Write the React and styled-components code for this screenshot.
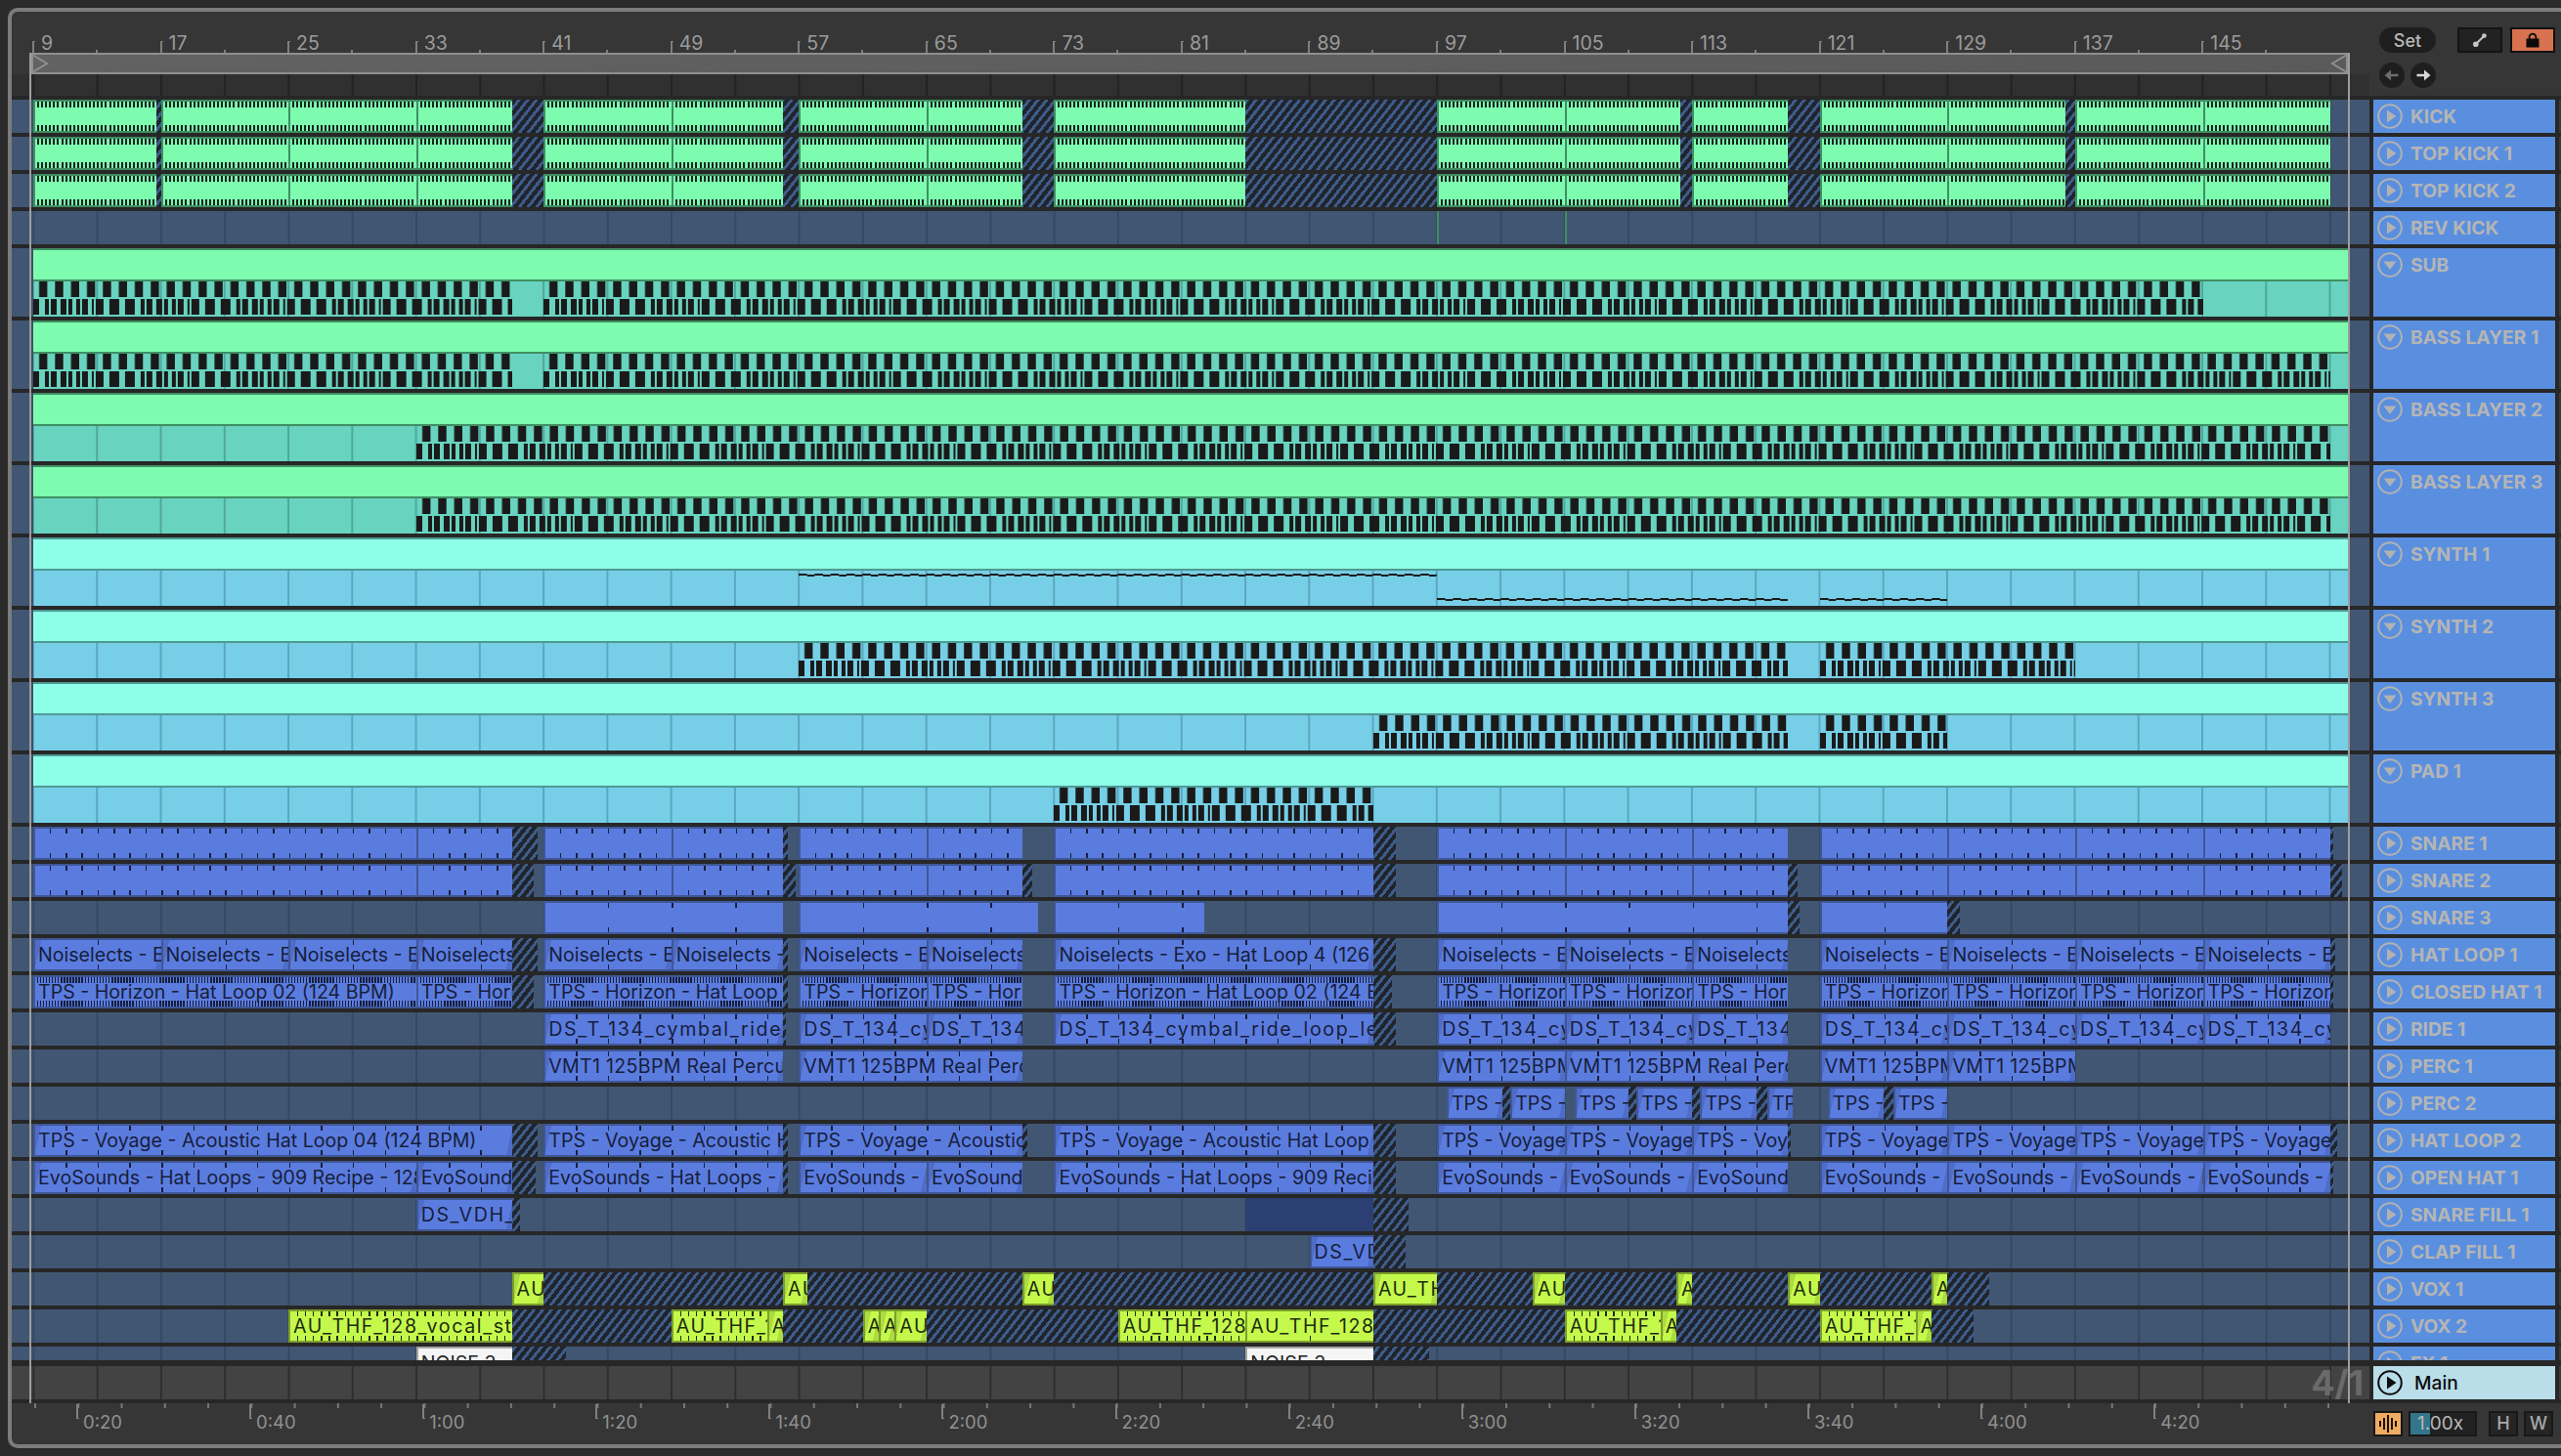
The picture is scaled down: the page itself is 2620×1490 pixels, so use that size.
import React from "react";
import styled, { createGlobalStyle } from "styled-components";

const BAR = 16.32;
const barX = (bar) => 22 + (bar - 9) * BAR;
const span = (a, b) => ({ left: barX(a), width: (b - a) * BAR });

const TONES = {
  green: { fill: "#7dfcb0", edge: "#3f8f62", ink: "#14241c", fade: "#7dfcb0" },
  blue: { fill: "#5b7cdf", edge: "#3f5796", ink: "#161e3c", fade: "#4f6dc8" },
  lime: { fill: "#c4f94c", edge: "#7d9e2c", ink: "#1f2b0c", fade: "#abdc40" },
  white: { fill: "#f5f5f5", edge: "#a4a4a4", ink: "#222222", fade: "#f5f5f5" },
};

const TICKS = { kick: 4.08, bar: 16.32, two: 32.64, four: 65.28, dense: 3.06, half: 8.16 };

const nameSpacing = (text) => (text.includes("_") ? 1.6 : text.startsWith("VMT1") ? 0.3 : 0);

// only what fits in the clip is shown, the rest of the name is dropped
const visibleName = (text, a, b) => text.slice(0, Math.ceil(((b - a) * BAR) / 8.5) + 1);

const GlobalStyle = createGlobalStyle`
  html, body {
    margin: 0;
    padding: 0;
    background: #2b2b2b;
  }
  body {
    font-family: Inter, "Liberation Sans", sans-serif;
    width: 2620px;
    height: 1490px;
    overflow: hidden;
  }
`;

const Frame = styled.div`
  position: relative;
  box-sizing: border-box;
  margin: 8px 0 0 8px;
  width: 2612px;
  height: 1474px;
  border: 4px solid #7c7c7c;
  border-right: none;
  border-radius: 10px 0 0 10px;
  background: #363636;
  display: flex;
  flex-direction: column;
  overflow: hidden;
`;

const TopBar = styled.div`
  display: flex;
  height: 86px;
  flex: none;
`;

const TopLeft = styled.div`
  width: 2412px;
  flex: none;
  display: flex;
  flex-direction: column;
`;

const BeatRuler = styled.div`
  display: flex;
  height: 64px;
  padding-left: 21px;
`;

const BeatMark = styled.div`
  position: relative;
  width: 130.56px;
  flex: none;
  padding: 23px 0 0 9px;
  box-sizing: border-box;
  font-size: 19.5px;
  line-height: 18px;
  color: #9b9b9b;

  &::before {
    content: "";
    position: absolute;
    left: 0;
    top: 30px;
    width: 3px;
    height: 12px;
    border-left: 2px solid #7e7e7e;
    border-top: 1px solid #7e7e7e;
    box-sizing: border-box;
  }
  &::after {
    content: "";
    position: absolute;
    left: 65px;
    top: 39px;
    width: 2px;
    height: 3px;
    background: #7e7e7e;
  }
`;

const GridStrip = styled.div`
  height: 22px;
  background-color: #303030;
  background-image: linear-gradient(90deg, #222222 2px, transparent 2px);
  background-size: 65.28px 100%;
  background-position: 21.4px 0;
`;

const Controls = styled.div`
  flex: 1;
  padding: 16px 0 0 10px;
  display: grid;
  grid-template-columns: 58px 68px 54px;
  grid-template-rows: 26px 26px;
  row-gap: 10px;
`;

const SetButton = styled.button`
  width: 58px;
  height: 26px;
  border: none;
  border-radius: 13px;
  background: #1e1e1e;
  color: #b9b9b9;
  font: 500 18px Inter, sans-serif;
  padding: 0;
`;

const SquareButton = styled.button`
  box-sizing: border-box;
  width: 46px;
  height: 26px;
  margin-left: ${(p) => p.$offset}px;
  border: 2px solid ${(p) => (p.$on ? "#111111" : "#141414")};
  background: ${(p) => (p.$on ? "#d8714f" : "#222222")};
  display: flex;
  align-items: center;
  justify-content: center;
  padding: 0;
`;

const ArrowPair = styled.div`
  grid-column: 1;
  display: flex;
  gap: 6px;
`;

const ArrowButton = styled.button`
  width: 26px;
  height: 26px;
  border: none;
  border-radius: 50%;
  background: #1e1e1e;
  display: flex;
  align-items: center;
  justify-content: center;
  padding: 0;
`;

const Divider = styled.div`
  height: ${(p) => p.$h}px;
  flex: none;
  background: #272727;
`;

const TrackList = styled.div`
  height: 1290px;
  flex: none;
  overflow: hidden;
  display: flex;
  flex-direction: column;
  gap: 4px;
  background: #272727;
`;

const Row = styled.div`
  display: flex;
  flex: none;
  height: ${(p) => p.$h}px;
  background: #272727;
`;

const Lane = styled.div`
  position: relative;
  width: 2412px;
  flex: none;
  background-color: #415672;
  background-image: linear-gradient(90deg, #35495f 2px, transparent 2px);
  background-size: 65.28px 100%;
  background-position: 21.4px 0;
  overflow: hidden;
`;

const Clip = styled.div`
  position: absolute;
  top: 0;
  bottom: 0;
  box-sizing: border-box;
  display: flex;
  align-items: center;
  overflow: hidden;
  border-top: 2px solid ${(p) => TONES[p.$tone].edge};
  border-bottom: 2px solid ${(p) => TONES[p.$tone].edge};
  border-left: 2px solid ${(p) => TONES[p.$tone].edge};
  background-color: ${(p) => TONES[p.$tone].fill};
  ${(p) =>
    p.$fade &&
    `background-image:
      linear-gradient(103deg, ${TONES[p.$tone].fade} 6px, transparent 6px),
      linear-gradient(-77deg, ${TONES[p.$tone].fade} 6px, transparent 6px);`}
  color: ${(p) => TONES[p.$tone].ink};

  ${(p) =>
    p.$ticks &&
    `&::before, &::after {
      content: "";
      position: absolute;
      left: 0;
      right: 0;
      height: ${p.$ticks === "kick" || p.$ticks === "dense" ? 6 : 5}px;
      background-image: repeating-linear-gradient(
        90deg,
        transparent 0 ${TICKS[p.$ticks] - (p.$ticks === "kick" ? 2 : 1.5)}px,
        ${TONES[p.$tone].ink} ${TICKS[p.$ticks] - (p.$ticks === "kick" ? 2 : 1.5)}px ${TICKS[p.$ticks]}px
      );
    }
    &::before { top: 0; }
    &::after { bottom: 0; }`}
`;

const ClipName = styled.span`
  display: block;
  flex: 1;
  min-width: 0;
  padding-left: 3px;
  overflow: hidden;
  font-size: 19.6px;
  letter-spacing: ${(p) => p.$spacing}px;
  line-height: 30px;
  white-space: nowrap;
`;

const Hatch = styled.div`
  position: absolute;
  top: 0;
  bottom: 0;
  background-image: repeating-linear-gradient(
    -52deg,
    #20242c 0 4px,
    #3e5b88 4px 7px
  );
`;

const Selection = styled.div`
  position: absolute;
  top: 0;
  bottom: 0;
  background: #2c3f72;
`;

const GroupClip = styled.div`
  position: absolute;
  left: 22px;
  width: 2368px;
  top: 0;
  bottom: 0;
  display: flex;
  flex-direction: column;
  border-top: 2px solid ${(p) => p.$edge};
`;

const GroupHead = styled.div`
  height: 30px;
  flex: none;
  background: ${(p) => p.$fill};
  border-bottom: 2px solid ${(p) => p.$edge};
`;

const GroupBody = styled.div`
  position: relative;
  flex: 1;
  background-color: ${(p) => p.$fill};
  background-image: linear-gradient(90deg, ${(p) => p.$grid} 2px, transparent 2px);
  background-size: 65.28px 100%;
  background-position: -1px 0;
`;

const NoteRow = styled.div`
  position: absolute;
  height: 16px;
`;

const PulseNotes = styled(NoteRow)`
  top: 0;
  background-image: linear-gradient(
    90deg,
    transparent 6px,
    #2c4c48 6px 7px,
    #1a1a1a 7px 14px,
    transparent 14px
  );
  background-size: 16.32px 100%;
`;

const RiffNotes = styled(NoteRow)`
  top: 18px;
  background-image: linear-gradient(
    90deg,
    #1a1a1a 0 6px,
    transparent 6px 12px,
    #1a1a1a 12px 16px,
    transparent 16px 18px,
    #1a1a1a 18px 24px,
    transparent 24px 28px,
    #1a1a1a 28px 34px,
    transparent 34px 36px,
    #1a1a1a 36px 40px,
    transparent 40px 44px,
    #1a1a1a 44px 48px,
    transparent 48px 50px,
    #1a1a1a 50px 56px,
    transparent 56px 60px,
    #1a1a1a 60px 62px,
    transparent 62px 64px,
    #1a1a1a 64px 72px,
    transparent 72px 78px,
    #1a1a1a 78px 88px,
    transparent 88px 94px,
    #1a1a1a 94px 97.92px
  );
  background-size: 97.92px 100%;
`;

const Squiggle = styled.div`
  position: absolute;
  top: ${(p) => p.$top}px;
  height: 3px;
  background-image:
    linear-gradient(90deg, #1a1a1a 9px, transparent 9px),
    linear-gradient(90deg, transparent 9px, #1a1a1a 9px);
  background-size: 16.32px 2px, 16.32px 2px;
  background-position: 0 0, 0 1px;
  background-repeat: repeat-x;
`;

const Header = styled.div`
  width: 186px;
  margin-left: 4px;
  flex: none;
  box-sizing: border-box;
  padding: 4px 0 0 4px;
  display: flex;
  align-items: flex-start;
  gap: 8px;
  background: ${(p) => (p.$main ? "#b9dde9" : "#5a8fdf")};
  color: ${(p) => (p.$main ? "#0c0c0c" : "#b5b5b5")};
  font-size: 19.2px;
  font-weight: ${(p) => (p.$main ? 500 : 700)};
  line-height: 27px;
  white-space: nowrap;
`;

const Tail = styled.div`
  margin-left: 4px;
  flex: 1;
  background: #3a3a3a;
`;

const MainLane = styled.div`
  position: relative;
  width: 2412px;
  flex: none;
  background-color: #434343;
  background-image: linear-gradient(90deg, #2e2e2e 2px, transparent 2px);
  background-size: 65.28px 100%;
  background-position: 21.4px 0;
`;

const Meter = styled.div`
  position: absolute;
  right: 6px;
  top: 0;
  font-size: 36px;
  font-weight: 700;
  line-height: 34px;
  color: #6a6a6a;
`;

const MainName = styled.span`
  margin-left: 4px;
`;

const TimeRow = styled.div`
  display: flex;
  flex: 1;
`;

const TimeRuler = styled.div`
  width: 2412px;
  flex: none;
  display: flex;
  padding-left: 66px;
  box-sizing: border-box;
  background-image: linear-gradient(90deg, #777777 2px, transparent 2px);
  background-size: 44.27px 5px;
  background-position: 23px 0;
  background-repeat: repeat-x;
`;

const TimeMark = styled.div`
  position: relative;
  width: 177.1px;
  flex: none;
  box-sizing: border-box;
  padding: 9px 0 0 7px;
  font-size: 18.5px;
  line-height: 20px;
  color: #909090;

  &::before {
    content: "";
    position: absolute;
    left: 0;
    top: 1px;
    width: 3px;
    height: 15px;
    border-left: 2px solid #808080;
    border-bottom: 1px solid #808080;
    box-sizing: border-box;
  }
`;

const BottomControls = styled.div`
  padding: 8px 0 0 4px;
  display: flex;
  gap: 6px;
`;

const WaveButton = styled.div`
  box-sizing: border-box;
  width: 30px;
  height: 26px;
  border: 2px solid #181818;
  background: #f0ab62;
  display: flex;
  align-items: center;
  justify-content: center;
`;

const ZoomField = styled.div`
  box-sizing: border-box;
  width: 70px;
  height: 26px;
  border: 2px solid #181818;
  background: linear-gradient(90deg, #33758a 20px, #212121 20px);
  color: #b8b8b8;
  font-size: 19px;
  line-height: 22px;
  padding-left: 7px;
`;

const LetterButton = styled.div`
  box-sizing: border-box;
  width: 30px;
  height: 26px;
  margin-left: ${(p) => p.$offset}px;
  border: 2px solid #181818;
  background: #252525;
  color: #a8a8a8;
  font-size: 18px;
  font-weight: 500;
  line-height: 22px;
  text-align: center;
`;

const LoopFrame = styled.div`
  position: absolute;
  left: 18px;
  top: 42px;
  width: 2374px;
  height: 1382px;
  box-sizing: border-box;
  border-left: 2px solid #9d9d9d;
  border-right: 2px solid #9d9d9d;
  pointer-events: none;
`;

const LoopBar = styled.div`
  height: 22px;
  box-sizing: border-box;
  border-top: 2px solid #8f8f8f;
  border-bottom: 2px solid #8f8f8f;
  background: linear-gradient(90deg, #626262, #5a5a5a);
  display: flex;
  align-items: center;
  justify-content: space-between;
`;

const TrackIcon = ({ open, main }) => {
  const color = main ? "#0c0c0c" : "#b2b2b2";
  return (
    <svg width="26" height="26" viewBox="0 0 26 26" style={{ flex: "none" }}>
      <circle cx="13" cy="13" r="11.8" fill="none" stroke={color} strokeWidth="2" />
      {open ? (
        <polygon points="6.5,9.5 19.5,9.5 13,18" fill={color} />
      ) : (
        <polygon points="10,6.5 19.5,13 10,19.5" fill={color} />
      )}
    </svg>
  );
};

const kickClips = [[9, 16.7], [17, 25], [25, 33], [33, 39], [41, 49], [49, 56], [57, 65], [65, 71], [73, 85], [97, 105], [105, 112.25], [113, 119], [121, 129], [129, 136.4], [137, 145], [145, 153]];
const kickHatch = [[16.7, 17], [39, 41], [56, 57], [71, 73], [85, 97], [112.25, 113], [119, 121], [136.4, 137]];
const tailBars = [[97, 105], [105, 113], [113, 119], [121, 129], [129, 137], [137, 145], [145, 153]];

const blue = (ticks, text, spans, fade = true) =>
  spans.map(([a, b]) => ({ a, b, tone: "blue", ticks, text, fade }));
const green = (spans) => spans.map(([a, b]) => ({ a, b, tone: "green", ticks: "kick" }));
const lime = (ticks, text, spans) => spans.map(([a, b]) => ({ a, b, tone: "lime", ticks, text, fade: !ticks }));

const PALETTES = {
  green: { head: "#7dfcb0", edge: "#3f8f62", body: "#68d3bf", grid: "#4fa79e" },
  mint: { head: "#8dfee8", edge: "#4e9a93", body: "#76cfe6", grid: "#5ba6c0" },
};

const TRACKS = [
  { name: "KICK", clips: green(kickClips), hatch: kickHatch },
  { name: "TOP KICK 1", clips: green(kickClips), hatch: kickHatch },
  { name: "TOP KICK 2", clips: green(kickClips), hatch: kickHatch },
  { name: "REV KICK", clips: [[97, 97.1], [105, 105.1]].map(([a, b]) => ({ a, b, tone: "green" })) },
  { name: "SUB", palette: "green", notes: [[9, 39], [41, 145]] },
  { name: "BASS LAYER 1", palette: "green", notes: [[9, 39], [41, 153]] },
  { name: "BASS LAYER 2", palette: "green", notes: [[33, 153]] },
  { name: "BASS LAYER 3", palette: "green", notes: [[33, 153]] },
  { name: "SYNTH 1", palette: "mint", lines: [[57, 97, 3], [97, 119, 28], [121, 129, 28]] },
  { name: "SYNTH 2", palette: "mint", notes: [[57, 119], [121, 137]] },
  { name: "SYNTH 3", palette: "mint", notes: [[93, 119], [121, 129]] },
  { name: "PAD 1", palette: "mint", notes: [[73, 93]] },
  {
    name: "SNARE 1",
    clips: blue("bar", "", [[9, 33], [33, 39], [41, 49], [49, 56], [57, 65], [65, 71], [73, 93], ...tailBars], false),
    hatch: [[39, 40.6], [56, 56.3], [93, 94.4], [104.9, 105], [128.9, 129], [153, 153.2]],
  },
  {
    name: "SNARE 2",
    clips: blue("bar", "", [[9, 33], [33, 39], [41, 49], [49, 56], [57, 65], [65, 71], [73, 93], ...tailBars], false),
    hatch: [[39, 40.4], [56, 56.8], [71, 71.6], [93, 94.4], [119, 119.6], [153, 153.7]],
  },
  {
    name: "SNARE 3",
    clips: blue("four", "", [[41, 56], [57, 72], [73, 82.4], [97, 119], [121, 129]], false),
    hatch: [[119, 119.7], [129, 129.8]],
  },
  {
    name: "HAT LOOP 1",
    clips: blue("four", "Noiselects - Exo - Hat Loop 4 (126 BPM)", [[9, 17], [17, 25], [25, 33], [33, 39], [41, 49], [49, 56], [57, 65], [65, 71], [73, 93], ...tailBars]),
    hatch: [[39, 40.6], [56, 56.3], [93, 94.4], [153, 153.3]],
  },
  {
    name: "CLOSED HAT 1",
    clips: blue("dense", "TPS - Horizon - Hat Loop 02 (124 BPM)", [[9, 33], [33, 39], [41, 56], [57, 65], [65, 71], [73, 93], ...tailBars], false),
    hatch: [[39, 40.4], [56, 56.3], [93, 94.2], [153, 153.2]],
  },
  {
    name: "RIDE 1",
    clips: blue("two", "DS_T_134_cymbal_ride_loop_lead", [[41, 56], [57, 65], [65, 71], [73, 93], ...tailBars]),
    hatch: [[56, 56.2], [93, 94.4]],
  },
  {
    name: "PERC 1",
    clips: blue("two", "VMT1 125BPM Real Percussion", [[41, 56], [57, 71], [97, 105], [105, 119], [121, 129], [129, 137]]),
  },
  {
    name: "PERC 2",
    clips: blue("", "TPS - Voyage - Perc", [[97.6, 101.1], [101.6, 105], [105.6, 109], [109.5, 113], [113.5, 117], [117.7, 119.3], [121.5, 125], [125.6, 129]]),
    hatch: [[101.1, 101.6], [109, 109.5], [113, 113.5], [117, 117.7], [125, 125.6]],
  },
  {
    name: "HAT LOOP 2",
    clips: blue("two", "TPS - Voyage - Acoustic Hat Loop 04 (124 BPM)", [[9, 39], [41, 56], [57, 71], [73, 93], ...tailBars]),
    hatch: [[39, 40.6], [56, 56.3], [71, 71.3], [93, 94.4], [119, 119.2], [153, 153.4]],
  },
  {
    name: "OPEN HAT 1",
    clips: blue("two", "EvoSounds - Hat Loops - 909 Recipe - 128 BPM", [[9, 33], [33, 39], [41, 56], [57, 65], [65, 71], [73, 93], ...tailBars]),
    hatch: [[39, 40.5], [56, 56.3], [93, 94.4], [153, 153.2]],
  },
  {
    name: "SNARE FILL 1",
    clips: blue("", "DS_VDH_Snare_Fill", [[33, 39]]),
    hatch: [[39, 39.5], [93, 95.2]],
    selection: [85, 93],
  },
  {
    name: "CLAP FILL 1",
    clips: blue("", "DS_VDH_Clap_Fill", [[89, 93]]),
    hatch: [[93, 95]],
  },
  {
    name: "VOX 1",
    clips: lime("", "AU_THF_128_vocal_stab", [[39, 41], [56, 57.5], [71, 73], [93, 97], [103, 105], [112, 113], [119, 121], [128, 129]]),
    hatch: [[41, 56], [57.5, 71], [73, 93], [97, 103], [105, 112], [113, 119], [121, 128], [129, 131.6]],
  },
  {
    name: "VOX 2",
    clips: [
      ...lime("half", "AU_THF_128_vocal_stab", [[25, 39], [49, 55], [77, 85], [105, 111], [121, 127]]),
      ...lime("", "AU_THF_128_vocal_stab", [[55, 56], [61, 62], [62, 63], [63, 65], [111, 112], [127, 128]]),
      ...lime("four", "AU_THF_128_vocal_stab", [[85, 93]]),
    ],
    hatch: [[39, 49], [56, 61], [65, 77], [93, 105], [112, 121], [128, 130.6]],
  },
  {
    name: "FX 1",
    clips: [[33, 39], [85, 93]].map(([a, b]) => ({ a, b, tone: "white", text: "NOISE 3" })),
    hatch: [[39, 42.4], [93, 96.5]],
  },
];

const BEATS = Array.from({ length: 18 }, (_, i) => 9 + i * 8);
const TIMES = ["0:20", "0:40", "1:00", "1:20", "1:40", "2:00", "2:20", "2:40", "3:00", "3:20", "3:40", "4:00", "4:20"];

const Track = ({ track }) => {
  const palette = track.palette && PALETTES[track.palette];
  return (
    <Row $h={palette ? 70 : 34}>
      <Lane>
        {palette && (
          <GroupClip $edge={palette.edge}>
            <GroupHead $fill={palette.head} $edge={palette.edge} />
            <GroupBody $fill={palette.body} $grid={palette.grid}>
              {(track.notes || []).map(([a, b]) => {
                const style = { left: (a - 9) * BAR, width: (b - a) * BAR };
                return (
                  <React.Fragment key={a}>
                    <PulseNotes style={style} />
                    <RiffNotes style={style} />
                  </React.Fragment>
                );
              })}
              {(track.lines || []).map(([a, b, top]) => (
                <Squiggle key={a} $top={top} style={{ left: (a - 9) * BAR, width: (b - a) * BAR }} />
              ))}
            </GroupBody>
          </GroupClip>
        )}
        {track.selection && <Selection style={span(...track.selection)} />}
        {(track.hatch || []).map(([a, b]) => (
          <Hatch key={a} style={span(a, b)} />
        ))}
        {(track.clips || []).map((c) => (
          <Clip key={c.a} $tone={c.tone} $ticks={c.ticks} $fade={c.fade} style={span(c.a, c.b)}>
            {c.text && <ClipName $spacing={nameSpacing(c.text)}>{visibleName(c.text, c.a, c.b)}</ClipName>}
          </Clip>
        ))}
      </Lane>
      <Header>
        <TrackIcon open={!!palette} />
        {track.name}
      </Header>
      <Tail />
    </Row>
  );
};

const App = () => (
  <>
    <GlobalStyle />
    <Frame>
      <TopBar>
        <TopLeft>
          <BeatRuler>
            {BEATS.map((b) => (
              <BeatMark key={b}>{b}</BeatMark>
            ))}
          </BeatRuler>
          <GridStrip />
        </TopLeft>
        <Controls>
          <SetButton>Set</SetButton>
          <SquareButton $offset={22}>
            <svg width="16" height="16" viewBox="0 0 16 16">
              <line x1="3.5" y1="12.5" x2="12.5" y2="3.5" stroke="#c4c4c4" strokeWidth="2" />
              <circle cx="3.8" cy="12.2" r="2.8" fill="#c4c4c4" />
              <circle cx="12.4" cy="3.6" r="2.4" fill="#c4c4c4" />
            </svg>
          </SquareButton>
          <SquareButton $offset={8} $on>
            <svg width="16" height="16" viewBox="0 0 16 16">
              <path d="M4.6 7V5a3.4 3.4 0 0 1 6.8 0v2" fill="none" stroke="#0a0a0a" strokeWidth="1.8" />
              <rect x="1.5" y="6.5" width="13" height="9" fill="#0a0a0a" />
            </svg>
          </SquareButton>
          <ArrowPair>
            <ArrowButton>
              <svg width="16" height="14" viewBox="0 0 16 14">
                <path d="M0.5 7 L7 1.5 V5.8 H14.5 V8.2 H7 V12.5 Z" fill="#6c6c6c" />
              </svg>
            </ArrowButton>
            <ArrowButton>
              <svg width="16" height="14" viewBox="0 0 16 14">
                <path d="M15.5 7 L9 1.5 V5.8 H1.5 V8.2 H9 V12.5 Z" fill="#d8d8d8" />
              </svg>
            </ArrowButton>
          </ArrowPair>
        </Controls>
      </TopBar>
      <Divider $h={4} />
      <TrackList>
        {TRACKS.map((t) => (
          <Track key={t.name} track={t} />
        ))}
      </TrackList>
      <Divider $h={6} />
      <Row $h={34}>
        <MainLane>
          <Meter>4/1</Meter>
        </MainLane>
        <Header $main>
          <TrackIcon main />
          <MainName>Main</MainName>
        </Header>
        <Tail />
      </Row>
      <Divider $h={4} />
      <TimeRow>
        <TimeRuler>
          {TIMES.map((t) => (
            <TimeMark key={t}>{t}</TimeMark>
          ))}
        </TimeRuler>
        <BottomControls>
          <WaveButton>
            <svg width="20" height="18" viewBox="0 0 20 18">
              {[[2, 6, 12], [6, 3, 15], [10, 0, 18], [14, 3, 15], [18, 6, 12]].map(([x, a, b]) => (
                <line key={x} x1={x} y1={a} x2={x} y2={b} stroke="#1a1206" strokeWidth="2" />
              ))}
            </svg>
          </WaveButton>
          <ZoomField>1.00x</ZoomField>
          <LetterButton $offset={6}>H</LetterButton>
          <LetterButton>W</LetterButton>
        </BottomControls>
      </TimeRow>
      <LoopFrame>
        <LoopBar>
          <svg width="18" height="20" viewBox="0 0 18 20">
            <polygon points="1,1 16,10 1,19" fill="none" stroke="#8f8f8f" strokeWidth="2" />
          </svg>
          <svg width="18" height="20" viewBox="0 0 18 20">
            <polygon points="17,1 2,10 17,19" fill="none" stroke="#8f8f8f" strokeWidth="2" />
          </svg>
        </LoopBar>
      </LoopFrame>
    </Frame>
  </>
);

export default App;
